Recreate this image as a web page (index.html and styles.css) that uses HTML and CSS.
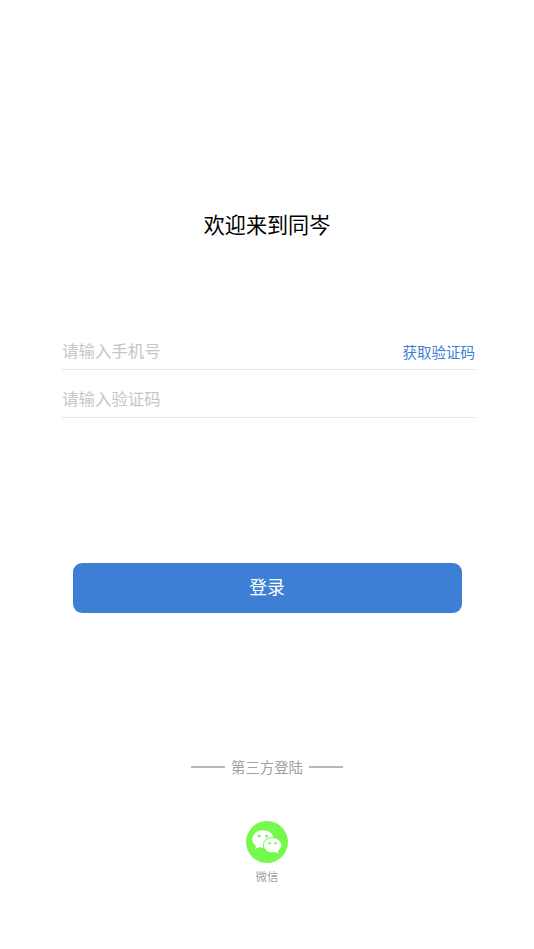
FILE: index.html
```html
<!DOCTYPE html>
<html lang="zh-CN">
<head>
<meta charset="utf-8">
<title>登录</title>
<link rel="stylesheet" href="styles.css">
</head>
<body>
<main class="page">
  <h1 class="title">欢迎来到同岑</h1>
  <form class="form">
    <div class="field"><span class="placeholder">请输入手机号</span><a class="code">获取验证码</a></div>
    <div class="field"><span class="placeholder">请输入验证码</span></div>
    <button class="login" type="button">登录</button>
  </form>
  <div class="divider"><span>第三方登陆</span></div>
  <div class="wechat">
    <svg class="logo" viewBox="0 0 42 42">
      <circle cx="21" cy="21" r="21" fill="#75f94c"/>
      <path fill="#fff" d="M17 9.300C10.900 9.300 6.300 13.200 6.300 18.200c0 2.800 1.500 5.100 3.800 6.700L9 28.300l4-2.200c1.400.4 2.700.6 4 .6 6.100 0 10.700-3.900 10.700-8.700S23 9.300 17 9.300Z"/>
      <path fill="#fff" stroke="#75f94c" stroke-width="2" paint-order="stroke" d="M26.500 17c-4.800 0-8.600 3.200-8.600 7.200s3.800 7.200 8.600 7.200c1.100 0 2.100-.2 3-.5l3 1.700-.8-2.800c2.200-1.400 3.500-3.400 3.500-5.600 0-4-3.900-7.200-8.700-7.200Z"/>
      <g fill="#75f94c"><circle cx="13.200" cy="15" r="1.500"/><circle cx="20.600" cy="15" r="1.500"/><circle cx="23.600" cy="22.200" r="1.300"/><circle cx="29.500" cy="22.200" r="1.300"/></g>
    </svg>
    <span class="caption">微信</span>
  </div>
</main>
</body>
</html>
```
FILE: styles.css
```css
body { margin: 0; background: #fff; font-family: "Noto Sans CJK SC", sans-serif; }
.page { height: 949px; display: flex; flex-direction: column; }
.title { margin: 208px 0 0; font-size: 21.100px; line-height: 32px; font-weight: 400; text-align: center; color: #000; }
.form { display: flex; flex-direction: column; margin: 82px 59px 0 62px; }
.field { height: 47px; border-bottom: 1px solid #e5e5e5; display: flex; justify-content: space-between; align-items: center; }
.placeholder { font-size: 16.450px; color: #c6c6c8; line-height: 24px; margin-top: 8px; }
.code { font-size: 14.500px; color: #3d7fd4; line-height: 22px; margin-top: 12px; }
.login { margin: 145px 13.500px 0 10.500px; height: 50px; border: 0; border-radius: 9px; background: #3d7fd4; color: #fff; font: 17.800px/46px "Noto Sans CJK SC", sans-serif; padding: 0 0 4px; }
.divider { display: flex; justify-content: center; align-items: center; gap: 6px; margin-top: 143px; font-size: 14.400px; line-height: 22px; color: #a0a0a0; }
.divider::before, .divider::after { content: ""; width: 34px; height: 2px; background: #b8b8b8; }
.wechat { display: flex; flex-direction: column; align-items: center; margin-top: 43px; }
.logo { width: 42px; height: 42px; }
.caption { margin-top: 5px; font-size: 11.500px; line-height: 17px; color: #a0a0a0; }
```
